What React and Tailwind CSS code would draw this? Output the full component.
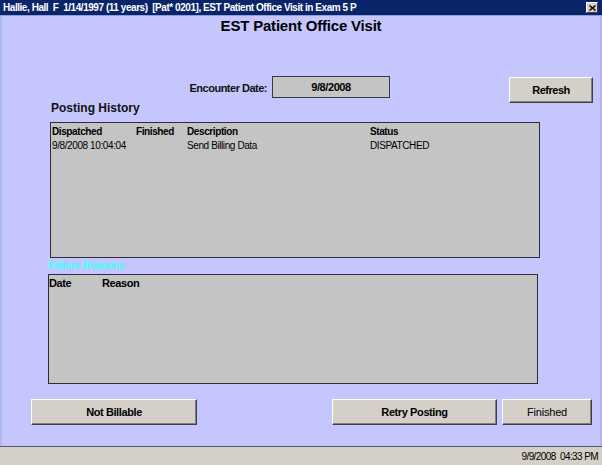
import React from 'react'

const btn = "bg-[#d4d0c8] border border-t-white border-l-white border-r-[#404040] border-b-[#404040] shadow-[inset_-1px_-1px_0_#808080] flex items-center justify-center text-[11px] text-black"

const rows = [
  { dispatched: '9/8/2008 10:04:04', finished: '', description: 'Send Billing Data', status: 'DISPATCHED' },
]

const App = () => {
  return (
    <div className="w-[602px] h-[465px] bg-[#c6c6fe] flex flex-col overflow-hidden font-['Liberation_Sans',Arial,sans-serif]">
      {/* title bar */}
      <div className="h-[16px] bg-[#0a246a] flex items-center justify-between pl-[3px] pr-[4px] border-b border-[#8fa0d8]">
        <span className="text-white font-bold text-[10px] tracking-[-0.45px] whitespace-nowrap">
          Hallie, Hall &nbsp;F &nbsp;1/14/1997 (11 years) &nbsp;[Pat* 0201], EST Patient Office Visit in Exam 5 P
        </span>
        <div className="w-[12px] h-[11px] bg-[#d4d0c8] border border-t-white border-l-white border-r-[#404040] border-b-[#404040] flex items-center justify-center">
          <svg width="7" height="6" viewBox="0 0 7 6">
            <path d="M0.5 0.5 L6.5 5.5 M6.5 0.5 L0.5 5.5" stroke="black" strokeWidth="1.4" />
          </svg>
        </div>
      </div>

      <div className="flex-1 flex flex-col border-l-2 border-l-[#a9b9ea] border-r-2 border-r-[#b4b4e8]">
        <div className="h-[19px] pt-[1px] text-center font-bold text-[15px] leading-[18px] tracking-[-0.2px] text-black">
          EST Patient Office Visit
        </div>

        {/* encounter date row */}
        <div className="mt-[41px] h-[24px] flex items-start">
          <div className="w-[265px] text-right pt-[4px] font-bold text-[11px] tracking-[-0.5px] text-[#111]">
            Encounter Date:
          </div>
          <div className="ml-[5px] w-[118px] h-[22px] bg-[#c4c4c4] border border-[#3a3a48] text-center font-bold text-[11px] tracking-[-0.4px] pt-[2px]">
            9/8/2008
          </div>
          <button className={btn + " ml-[119px] mt-[1px] w-[84px] h-[26px] font-bold tracking-[-0.5px]"}>
            Refresh
          </button>
        </div>

        <div className="pl-[49px] h-[16px] leading-[16px] font-bold text-[12px] text-[#111]">Posting History</div>

        {/* posting list */}
        <div className="ml-[48px] mt-[6px] w-[490px] h-[136px] bg-[#c4c4c4] border border-[#2c2c3c] text-[10px] tracking-[-0.4px] pt-[2px]">
          <div className="grid grid-cols-[84px_51px_183px_1fr] pl-[1px] font-bold h-[14px] leading-[14px]">
            <span>Dispatched</span>
            <span>Finished</span>
            <span>Description</span>
            <span>Status</span>
          </div>
          {rows.map((row, i) => (
            <div key={i} className="grid grid-cols-[84px_51px_183px_1fr] pl-[1px] h-[14px] leading-[14px]">
              <span>{row.dispatched}</span>
              <span>{row.finished}</span>
              <span>{row.description}</span>
              <span>{row.status}</span>
            </div>
          ))}
        </div>

        <div className="pl-[46px] h-[14px] leading-[14px] font-bold text-[11px] tracking-[-0.6px] text-[#44ffff]">Failure Reasons</div>

        {/* failure list */}
        <div className="ml-[46px] mt-[2px] w-[490px] h-[110px] bg-[#c4c4c4] border border-[#2c2c3c] text-[11px] tracking-[-0.4px] pt-[1px]">
          <div className="grid grid-cols-[53px_1fr] font-bold h-[14px] leading-[14px]">
            <span>Date</span>
            <span>Reason</span>
          </div>
        </div>

        {/* buttons */}
        <div className="mt-[15px] flex items-start">
          <button className={btn + " ml-[29px] w-[166px] h-[26px] font-bold tracking-[-0.4px]"}>Not Billable</button>
          <button className={btn + " ml-[135px] w-[165px] h-[26px] font-bold tracking-[-0.4px]"}>Retry Posting</button>
          <button className={btn + " ml-[5px] w-[90px] h-[26px] tracking-[-0.2px]"}>Finished</button>
        </div>
        <div className="flex-1" />
      </div>

      {/* status bar */}
      <div className="h-[19px] bg-[#d4d0c8] border-t border-t-[#5a5a6a] flex items-center justify-end pr-[4px] text-[10px] tracking-[-0.6px] text-black">
        9/9/2008&nbsp;&nbsp;04:33 PM
      </div>
    </div>
  )
}

export default App
